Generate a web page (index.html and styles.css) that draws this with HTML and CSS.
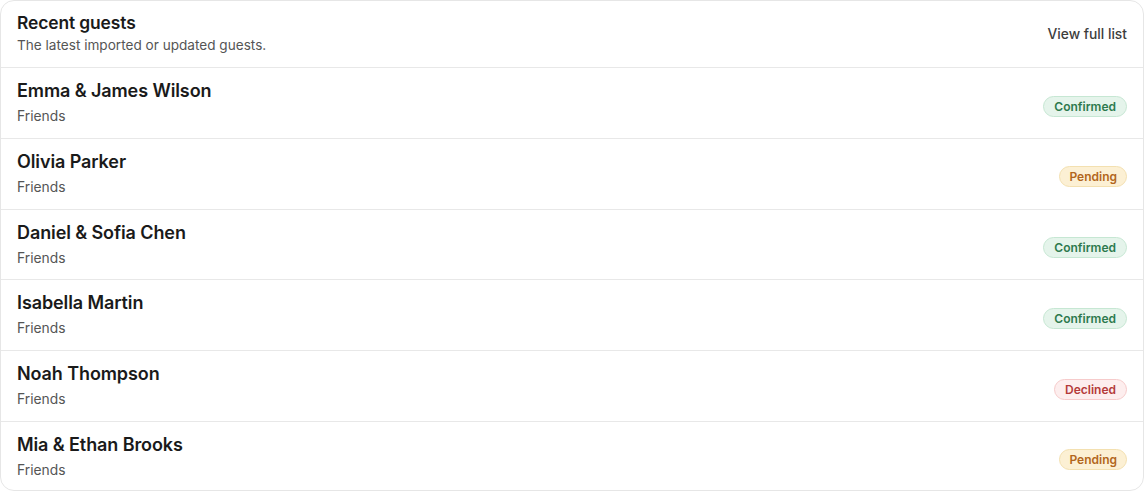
FILE: index.html
```html
<!DOCTYPE html>
<html lang="en">
<head>
<meta charset="utf-8">
<title>Recent guests</title>
<link rel="stylesheet" href="styles.css">
</head>
<body>
<section class="card">
  <header class="card-head">
    <div class="head-text">
      <h2 class="title">Recent guests</h2>
      <p class="subtitle">The latest imported or updated guests.</p>
    </div>
    <a class="view-all" href="#">View full list</a>
  </header>
  <ul class="guest-list">
    <li class="guest">
      <div class="guest-info"><div class="guest-name">Emma &amp; James Wilson</div><div class="guest-group">Friends</div></div>
      <span class="badge badge-confirmed">Confirmed</span>
    </li>
    <li class="guest">
      <div class="guest-info"><div class="guest-name">Olivia Parker</div><div class="guest-group">Friends</div></div>
      <span class="badge badge-pending">Pending</span>
    </li>
    <li class="guest">
      <div class="guest-info"><div class="guest-name">Daniel &amp; Sofia Chen</div><div class="guest-group">Friends</div></div>
      <span class="badge badge-confirmed">Confirmed</span>
    </li>
    <li class="guest">
      <div class="guest-info"><div class="guest-name">Isabella Martin</div><div class="guest-group">Friends</div></div>
      <span class="badge badge-confirmed">Confirmed</span>
    </li>
    <li class="guest">
      <div class="guest-info"><div class="guest-name">Noah Thompson</div><div class="guest-group">Friends</div></div>
      <span class="badge badge-declined">Declined</span>
    </li>
    <li class="guest">
      <div class="guest-info"><div class="guest-name">Mia &amp; Ethan Brooks</div><div class="guest-group">Friends</div></div>
      <span class="badge badge-pending">Pending</span>
    </li>
  </ul>
</section>
</body>
</html>
```

FILE: styles.css
```css
* { box-sizing: border-box; }
html, body { margin: 0; padding: 0; background: #ffffff; }
body {
  font-family: Inter, "Noto Sans", "Liberation Sans", sans-serif;
  color: #1c1c1c;
}
.card {
  width: 1144px;
  height: 491px;
  border: 1px solid #e6e6e6;
  border-radius: 14px;
  background: #fff;
  overflow: hidden;
}
.card-head {
  display: flex;
  align-items: center;
  justify-content: space-between;
  padding: 11px 16px 13px 16px;
  border-bottom: 1px solid #e8e8e8;
}
.title {
  margin: 0;
  font-size: 17.4px;
  line-height: 22px;
  font-weight: 600;
  color: #1a1a1a;
  letter-spacing: -0.1px;
}
.subtitle {
  margin: 2px 0 0 0;
  font-size: 13.6px;
  line-height: 18px;
  color: #555;
}
.view-all {
  margin-top: 2px;
  font-size: 13.8px;
  font-weight: 500;
  color: #3d3d3d;
  text-decoration: none;
}
.guest-list { list-style: none; margin: 0; padding: 0; }
.guest {
  display: flex;
  align-items: center;
  justify-content: space-between;
  padding: 12px 16px 11.8px 16px;
  border-bottom: 1px solid #e8e8e8;
}
.guest:last-child { border-bottom: none; }
.guest-name {
  font-size: 18px;
  line-height: 22px;
  font-weight: 600;
  color: #1a1a1a;
  letter-spacing: -0.1px;
}
.guest-group {
  margin-top: 4px;
  font-size: 13.8px;
  line-height: 20px;
  color: #555;
}
.badge {
  margin-top: 6px;
  display: inline-block;
  padding: 2px 10px;
  border-radius: 999px;
  font-size: 12px;
  line-height: 15px;
  font-weight: 600;
  border: 1px solid transparent;
}
.badge-pending { padding: 2px 9px; }
.badge-confirmed { background: #e5f4eb; border-color: #c6e7d3; color: #2e7a4e; }
.badge-pending { background: #fcf0d4; border-color: #f3e0b0; color: #b2661c; }
.badge-declined { background: #fdeeee; border-color: #f6cbcb; color: #b43a3a; }
```
